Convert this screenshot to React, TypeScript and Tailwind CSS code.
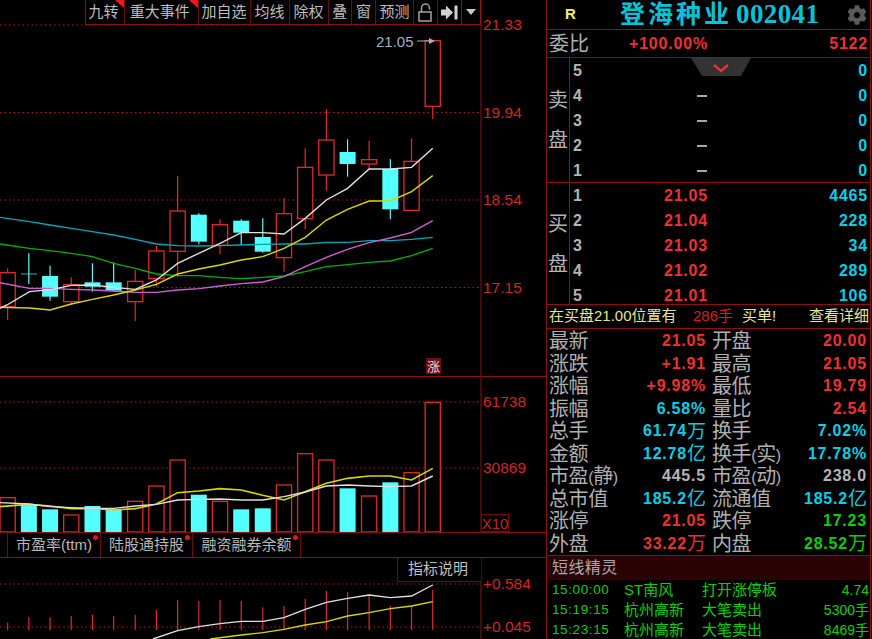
import { FaCog } from "react-icons/fa";

const RED = "#e02a2a";
const CYAN = "#54ffff";
const cx = (x: number) => x / 2.877;
const pts = (arr: number[][], top = 0) => arr.map(([x, y]) => `${cx(x)},${y / 3 + top}`).join(" ");

// x, up?, bodyTop, bodyBottom, wickTop, wickBottom (values read off the 3x crops)
const candles: [number, boolean, number, number, number, number][] = [
  [22, true, 818, 920, 805, 960],
  [83, false, 821, 823, 760, 852],
  [144, false, 828, 890, 797, 902],
  [205, true, 854, 905, 832, 915],
  [266, false, 847, 860, 790, 875],
  [327, false, 847, 872, 787, 875],
  [389, true, 844, 905, 810, 963],
  [450, true, 753, 836, 738, 860],
  [511, true, 633, 754, 527, 830],
  [572, false, 644, 725, 640, 733],
  [633, true, 674, 736, 658, 763],
  [694, false, 662, 698, 658, 735],
  [756, false, 711, 755, 655, 758],
  [817, true, 641, 773, 595, 815],
  [878, true, 502, 656, 445, 688],
  [939, true, 420, 525, 328, 572],
  [1000, false, 456, 492, 418, 530],
  [1062, true, 479, 492, 422, 507],
  [1123, false, 507, 628, 478, 658],
  [1184, true, 484, 631, 415, 631],
  [1245, true, 122, 319, 122, 357],
];

const ma5 = [[0,925],[20,915],[85,875],[150,868],[205,856],[266,855],[327,862],[389,868],[450,840],[511,790],[572,760],[633,730],[694,698],[756,698],[817,702],[878,655],[939,600],[1000,565],[1062,507],[1123,507],[1184,502],[1245,445]];
const ma10 = [[0,922],[85,924],[144,930],[205,912],[266,898],[327,885],[389,870],[450,853],[511,822],[572,807],[633,795],[694,780],[756,770],[817,745],[878,712],[939,660],[1000,628],[1062,603],[1123,603],[1184,575],[1245,527]];
const ma20 = [[0,848],[85,865],[144,865],[205,868],[266,870],[327,873],[389,877],[450,877],[511,870],[572,866],[633,858],[694,851],[756,846],[817,830],[878,800],[939,772],[1000,748],[1062,728],[1123,714],[1184,697],[1245,662]];
const ma30 = [[0,652],[85,665],[144,675],[205,685],[266,695],[327,705],[389,718],[450,732],[511,737],[572,738],[633,737],[694,735],[756,733],[817,732],[878,732],[939,727],[1000,727],[1062,722],[1123,722],[1184,718],[1245,712]];
const ma60 = [[0,732],[85,745],[144,752],[205,760],[266,770],[327,790],[389,805],[450,822],[511,827],[572,827],[633,832],[694,836],[756,832],[817,828],[878,815],[939,800],[1000,794],[1062,787],[1123,783],[1184,767],[1245,745]];

const volumes: [number, boolean, number][] = [
  [22,true,533],[83,false,555],[144,false,568],[205,true,585],[266,false,558],[327,false,568],[389,true,544],[450,true,498],[511,true,420],[572,false,524],[633,true,544],[694,false,568],[756,false,565],[817,true,495],[878,true,401],[939,true,420],[1000,false,505],[1062,true,528],[1123,false,487],[1184,true,458],[1245,true,247],
];
const volYellow = [[0,560],[83,553],[144,558],[205,566],[266,565],[327,570],[389,566],[450,552],[511,518],[572,513],[633,506],[694,510],[756,526],[817,540],[878,515],[939,490],[1000,475],[1062,468],[1123,468],[1184,480],[1245,445]];
const volWhite = [[0,548],[83,552],[144,560],[205,563],[266,565],[327,565],[389,558],[450,553],[511,540],[572,538],[633,537],[694,540],[756,540],[817,530],[878,516],[939,498],[1000,495],[1062,498],[1123,500],[1184,498],[1245,468]];

const macdBars = [[22,908],[83,892],[144,892],[205,888],[266,884],[327,888],[389,884],[450,870],[511,840],[572,843],[633,840],[694,843],[756,862],[817,858],[878,836],[939,813],[1000,817],[1062,827],[1123,858],[1184,858],[1245,810]];
const macdWhite = [[440,957],[511,932],[572,920],[633,911],[694,904],[756,904],[817,893],[878,868],[939,847],[1000,835],[1062,825],[1123,833],[1184,828],[1245,795]];
const macdYellow = [[605,957],[694,945],[756,938],[817,928],[878,915],[939,905],[1000,888],[1062,878],[1123,866],[1184,858],[1245,845]];

const DottedLine = ({ y }: { y: number }) => (
  <line x1="0" x2="481" y1={y} y2={y} stroke="#b81818" strokeWidth="1" strokeDasharray="1.5 3" />
);

const Line = ({ points, color, width = 1.4 }: { points: string; color: string; width?: number }) => (
  <polyline points={points} fill="none" stroke={color} strokeWidth={width} />
);

const AxisLabel = ({ y, children }: { y: number; children: React.ReactNode }) => (
  <span
    className="absolute left-[483px] -translate-y-1/2 text-[15.5px] leading-none text-[#d02626]"
    style={{ top: y }}
  >
    {children}
  </span>
);

const toolbar: [string, number, boolean?][] = [
  ["九转", 39, true],
  ["重大事件", 73.5, true],
  ["加自选", 52],
  ["均线", 39],
  ["除权", 39],
  ["叠", 23.5],
  ["窗", 24],
  ["预测", 38],
];

const Toolbar = () => (
  <div className="relative ml-[85px] flex h-[25px] w-[396px] border-b border-l border-[#8c1010] text-[15px] text-[#bdbdbd]">
    {toolbar.map(([label, w, flag]) => (
      <div
        key={label}
        className={`relative flex items-center justify-center border-r border-[#6e0c0c] ${flag ? "pr-[3px]" : ""}`}
        style={{ width: w }}
      >
        {label}
        {flag && (
          <svg className="absolute top-0 right-0" width="9" height="8">
            <polygon points="0,0 9,0 9,8" fill="#f01818" />
          </svg>
        )}
      </div>
    ))}
    <div className="flex w-[24px] items-center justify-center border-r border-[#6e0c0c]">
      <svg width="15" height="19" viewBox="0 0 15 19" fill="none" stroke="#a4a4a4" strokeWidth="1.5">
        <rect x="1" y="9" width="12" height="9" />
        <path d="M3.5 9V5a4 4 0 0 1 8 0v1.5" />
      </svg>
    </div>
    <div className="flex w-[24px] items-center justify-center border-r border-[#8c1010]">
      <svg width="17" height="15" viewBox="0 0 17 15" fill="#d0d0d0">
        <path d="M0 4.5h5V0.5l7 7-7 7V10.5H0z" />
        <rect x="13.5" y="0.5" width="3" height="14" />
      </svg>
    </div>
    <div className="flex flex-1 items-center justify-center border-r border-[#a01010]">
      <svg width="10" height="6">
        <polygon points="0,0 10,0 5,6" fill="#c8c8c8" />
      </svg>
    </div>
  </div>
);

const MainPane = () => (
  <div className="relative h-[377px] border-b border-[#8c1010]">
    <svg className="absolute inset-0" width="546" height="376">
      <line x1="481" x2="481" y1="0" y2="376" stroke="#8c1010" />
      <DottedLine y={25} />
      <DottedLine y={112.5} />
      <DottedLine y={200} />
      <DottedLine y={287.5} />
      {candles.map(([x, up, top, bottom, wt, wb]) => (
        <g key={x}>
          <line x1={cx(x)} x2={cx(x)} y1={wt / 3} y2={up ? top / 3 : wb / 3} stroke={up ? RED : CYAN} strokeWidth="1.2" />
          {up && <line x1={cx(x)} x2={cx(x)} y1={bottom / 3} y2={wb / 3} stroke={RED} strokeWidth="1.2" />}
          {up ? (
            <rect x={cx(x) - 7.6} width="15.2" y={top / 3} height={(bottom - top) / 3} fill="#000" stroke={RED} strokeWidth="1.3" />
          ) : (
            <rect x={cx(x) - 8} width="16" y={top / 3} height={(bottom - top) / 3} fill={CYAN} />
          )}
        </g>
      ))}
      <Line points={pts(ma30)} color="#00a8b8" />
      <Line points={pts(ma60)} color="#00b000" />
      <Line points={pts(ma20)} color="#d060d0" />
      <Line points={pts(ma10)} color="#d8d800" />
      <Line points={pts(ma5)} color="#e0e0e0" />
      <line x1="417" x2="430" y1="41" y2="41" stroke="#b0b0b0" />
      <polygon points="429,38 435,41 429,44" fill="#b0b0b0" />
    </svg>
    <Toolbar />
    <span className="absolute top-[33px] left-[376px] text-[15px] leading-[17px] text-[#a8b0bc]">21.05</span>
    <span className="absolute top-[358px] left-[426px] flex h-[16px] w-[15px] items-center justify-center bg-[#6e0d0d] text-[13px] leading-none text-[#f0d8d8]">
      涨
    </span>
    <AxisLabel y={25}>21.33</AxisLabel>
    <AxisLabel y={112.5}>19.94</AxisLabel>
    <AxisLabel y={200}>18.54</AxisLabel>
    <AxisLabel y={287.5}>17.15</AxisLabel>
  </div>
);

const VolumePane = () => {
  const base = 212;
  return (
    <div className="relative h-[155px]">
      <svg className="absolute inset-0" width="546" height="155">
        <line x1="481" x2="481" y1="0" y2="155" stroke="#8c1010" />
        <DottedLine y={82 - 57} />
        <DottedLine y={148 - 57} />
        {volumes.map(([x, up, top]) => {
          const y = top / 3 - 57;
          const h = base - 57 - y;
          return up ? (
            <rect key={x} x={cx(x) - 7.6} width="15.2" y={y} height={h} fill="#000" stroke={RED} strokeWidth="1.3" />
          ) : (
            <rect key={x} x={cx(x) - 8} width="16" y={y} height={h} fill={CYAN} />
          );
        })}
        <Line points={pts(volYellow, -57)} color="#d8d800" width={1.6} />
        <Line points={pts(volWhite, -57)} color="#e0e0e0" />
      </svg>
      <AxisLabel y={25}>61738</AxisLabel>
      <AxisLabel y={91}>30869</AxisLabel>
      <span className="absolute bottom-0 left-[481px] flex h-[18px] w-[28px] items-center justify-center border border-[#6e0c0c] text-[15px] leading-none text-[#c42424]">
        X10
      </span>
    </div>
  );
};

const tabs: [string, number][] = [
  ["市盈率(ttm)", 94],
  ["陆股通持股", 92],
  ["融资融券余额", 108],
];

const TabRow = () => (
  <div className="flex h-[26px] border-y border-[#8c1010] pl-[7px] text-[15px] text-[#b8b8b8]">
    {tabs.map(([label, w]) => (
      <div
        key={label}
        className="relative flex items-center justify-center border-r border-[#6e0c0c] first:border-l"
        style={{ width: w }}
      >
        {label}
        <span className="absolute top-[2px] right-[2px] h-[5px] w-[5px] rounded-full bg-[#f01010]" />
      </div>
    ))}
  </div>
);

const IndicatorPane = () => (
  <div className="relative h-[81px]">
    <svg className="absolute inset-0" width="546" height="81">
      <line x1="481" x2="481" y1="0" y2="81" stroke="#8c1010" />
      <DottedLine y={26} />
      <DottedLine y={69} />
      {macdBars.map(([x, top]) => (
        <line key={x} x1={cx(x)} x2={cx(x)} y1={top / 3 - 238} y2={72} stroke={RED} strokeWidth="1.2" />
      ))}
      <Line points={pts(macdYellow, -238)} color="#d8d800" />
      <Line points={pts(macdWhite, -238)} color="#e0e0e0" />
    </svg>
    <span className="absolute top-0 left-[397px] flex h-[24px] w-[84px] items-center justify-center border-b border-l border-[#6e0c0c] bg-black pr-[3px] text-[15px] text-[#c0c0c0]">
      指标说明
    </span>
    <AxisLabel y={26}>+0.584</AxisLabel>
    <AxisLabel y={69}>+0.045</AxisLabel>
  </div>
);

const Num = ({ className = "", children }: { className?: string; children: React.ReactNode }) => (
  <span className={`text-[16px] leading-none font-bold tracking-[0.8px] ${className}`}>{children}</span>
);

const BookRow = ({ n, price, qty, hideDash }: { n: number; price?: string; qty: string; hideDash?: boolean }) => (
  <div className="flex h-[25px] items-center pr-[2px] pl-[3px]">
    <span className="w-[16px] text-[16px] font-bold text-[#b4b4b4]">{n}</span>
    {price ? (
      <Num className="w-[119px] text-right text-[#f03030]">{price}</Num>
    ) : (
      <span className="flex w-[119px] justify-end pr-[1px]">
        {!hideDash && <span className="h-[2px] w-[10px] bg-[#a8a8a8]" />}
      </span>
    )}
    <Num className="flex-1 text-right text-[#08cfe6]">{qty}</Num>
  </div>
);

const SideLabel = ({ a, b }: { a: string; b: string }) => (
  <div className="flex w-[23px] flex-col items-center justify-center gap-[20px] border-r border-[#8c1010] text-[20px] leading-[20px] text-[#b4b4b4]">
    <span>{a}</span>
    <span>{b}</span>
  </div>
);

type Cell = { label: string; value: string; unit?: string; color: string };

const quotes: [Cell, Cell][] = [
  [{ label: "最新", value: "21.05", color: "text-[#f03030]" }, { label: "开盘", value: "20.00", color: "text-[#f03030]" }],
  [{ label: "涨跌", value: "+1.91", color: "text-[#f03030]" }, { label: "最高", value: "21.05", color: "text-[#f03030]" }],
  [{ label: "涨幅", value: "+9.98%", color: "text-[#f03030]" }, { label: "最低", value: "19.79", color: "text-[#f03030]" }],
  [{ label: "振幅", value: "6.58%", color: "text-[#08cfe6]" }, { label: "量比", value: "2.54", color: "text-[#f03030]" }],
  [{ label: "总手", value: "61.74", unit: "万", color: "text-[#08cfe6]" }, { label: "换手", value: "7.02%", color: "text-[#08cfe6]" }],
  [{ label: "金额", value: "12.78", unit: "亿", color: "text-[#08cfe6]" }, { label: "换手(实)", value: "17.78%", color: "text-[#08cfe6]" }],
  [{ label: "市盈(静)", value: "445.5", color: "text-[#b4b4b4]" }, { label: "市盈(动)", value: "238.0", color: "text-[#b4b4b4]" }],
  [{ label: "总市值", value: "185.2", unit: "亿", color: "text-[#08cfe6]" }, { label: "流通值", value: "185.2", unit: "亿", color: "text-[#08cfe6]" }],
  [{ label: "涨停", value: "21.05", color: "text-[#f03030]" }, { label: "跌停", value: "17.23", color: "text-[#08d008]" }],
  [{ label: "外盘", value: "33.22", unit: "万", color: "text-[#f03030]" }, { label: "内盘", value: "28.52", unit: "万", color: "text-[#08d008]" }],
];

const QuoteCell = ({ cell, width }: { cell: Cell; width: number }) => (
  <div className="flex items-center justify-between" style={{ width }}>
    <span className="text-[20px] leading-none tracking-[-0.4px] whitespace-nowrap text-[#b0b0b0]">
      {cell.label.split(/([()])/).map((part, i) =>
        part === "(" || part === ")" ? (
          <span key={i} className="text-[16px]">
            {part}
          </span>
        ) : (
          part
        ),
      )}
    </span>
    <span className={`flex items-center ${cell.color}`}>
      <Num>{cell.value}</Num>
      {cell.unit && <span className="text-[19px] leading-none">{cell.unit}</span>}
    </span>
  </div>
);

const spirit = [
  ["15:00:00", "ST南风", "打开涨停板", "4.74"],
  ["15:19:15", "杭州高新", "大笔卖出", "5300手"],
  ["15:23:15", "杭州高新", "大笔卖出", "8469手"],
];

const SidePanel = () => (
  <div className="relative flex w-[325px] flex-col border-x border-[#8c1010]">
    <div className="flex h-[30px] shrink-0 items-center border-b border-[#8c1010]">
      <span className="ml-[18px] w-[55px] text-[15px] font-bold text-[#f0f070]">R</span>
      <span
        className="text-[25px] leading-none font-bold tracking-[3px] whitespace-nowrap text-[#06c4d8]"
        style={{ fontFamily: '"Liberation Serif", "Noto Sans CJK SC", serif' }}
      >
        登海种业<span className="ml-[4px] text-[27px] tracking-[0.4px]">002041</span>
      </span>
      <FaCog className="absolute top-[5px] right-[3px] text-[#5a5a5a]" size={20} />
    </div>
    <div className="flex h-[28px] shrink-0 items-center border-b border-[#8c1010] px-[2px]">
      <span className="w-[80px] text-[20px] leading-none text-[#b0b0b0]">委比</span>
      <Num className="text-[#f03030]">+100.00%</Num>
      <Num className="flex-1 text-right text-[#f03030]">5122</Num>
    </div>
    <div className="relative flex h-[125px] shrink-0 border-b border-[#8c1010]">
      <SideLabel a="卖" b="盘" />
      <div className="flex-1">
        <BookRow n={5} qty="0" hideDash />
        <BookRow n={4} qty="0" />
        <BookRow n={3} qty="0" />
        <BookRow n={2} qty="0" />
        <BookRow n={1} qty="0" />
      </div>
      <svg className="absolute top-0 left-[144px]" width="60" height="18">
        <polygon points="0,0 60,0 50,18 11,18" fill="#333333" />
        <polyline points="23,7 30,13 37,7" fill="none" stroke="#f03030" strokeWidth="2.4" />
      </svg>
    </div>
    <div className="flex h-[122px] shrink-0 border-b border-[#8c1010]">
      <SideLabel a="买" b="盘" />
      <div className="flex-1">
        <BookRow n={1} price="21.05" qty="4465" />
        <BookRow n={2} price="21.04" qty="228" />
        <BookRow n={3} price="21.03" qty="34" />
        <BookRow n={4} price="21.02" qty="289" />
        <BookRow n={5} price="21.01" qty="106" />
      </div>
    </div>
    <div className="flex h-[24px] shrink-0 items-center border-b border-[#8c1010] pr-[1px] pl-[2px] text-[15px] whitespace-nowrap text-[#e6e690]">
      <span className="w-[144px]">在买盘21.00位置有</span>
      <span className="w-[49px] text-[#d02020]">286手</span>
      <span>买单!</span>
      <span className="flex-1 text-right">查看详细</span>
    </div>
    <div className="flex h-[227px] shrink-0 flex-col border-b border-[#8c1010] pt-[1px] pl-[2px]">
      {quotes.map(([a, b]) => (
        <div key={a.label} className="flex h-[22.5px] shrink-0 items-center gap-[6px]">
          <QuoteCell cell={a} width={157} />
          <QuoteCell cell={b} width={155} />
        </div>
      ))}
    </div>
    <div className="flex h-[24px] shrink-0 items-center bg-[#2a0404] pl-[5px] text-[16px] tracking-[0.4px] text-[#a8a8a8]">短线精灵</div>
    <div className="text-[15px] text-[#08d008]">
      {spirit.map(([time, name, event, val]) => (
        <div key={time} className="flex h-[20px] items-center pr-[1px] pl-[5px] whitespace-nowrap">
          <span className="w-[72px] text-[13.5px] tracking-[0.6px]">{time}</span>
          <span className="w-[78px]">{name}</span>
          <span className="flex-1">{event}</span>
          <span className="text-[14px]">{val}</span>
        </div>
      ))}
    </div>
  </div>
);

export default function App() {
  return (
    <div
      className="flex h-[639px] w-[872px] overflow-hidden bg-black"
      style={{ fontFamily: '"Liberation Sans", "Noto Sans CJK SC", sans-serif' }}
    >
      <div className="flex w-[546px] flex-col">
        <MainPane />
        <VolumePane />
        <TabRow />
        <IndicatorPane />
      </div>
      <SidePanel />
    </div>
  );
}
